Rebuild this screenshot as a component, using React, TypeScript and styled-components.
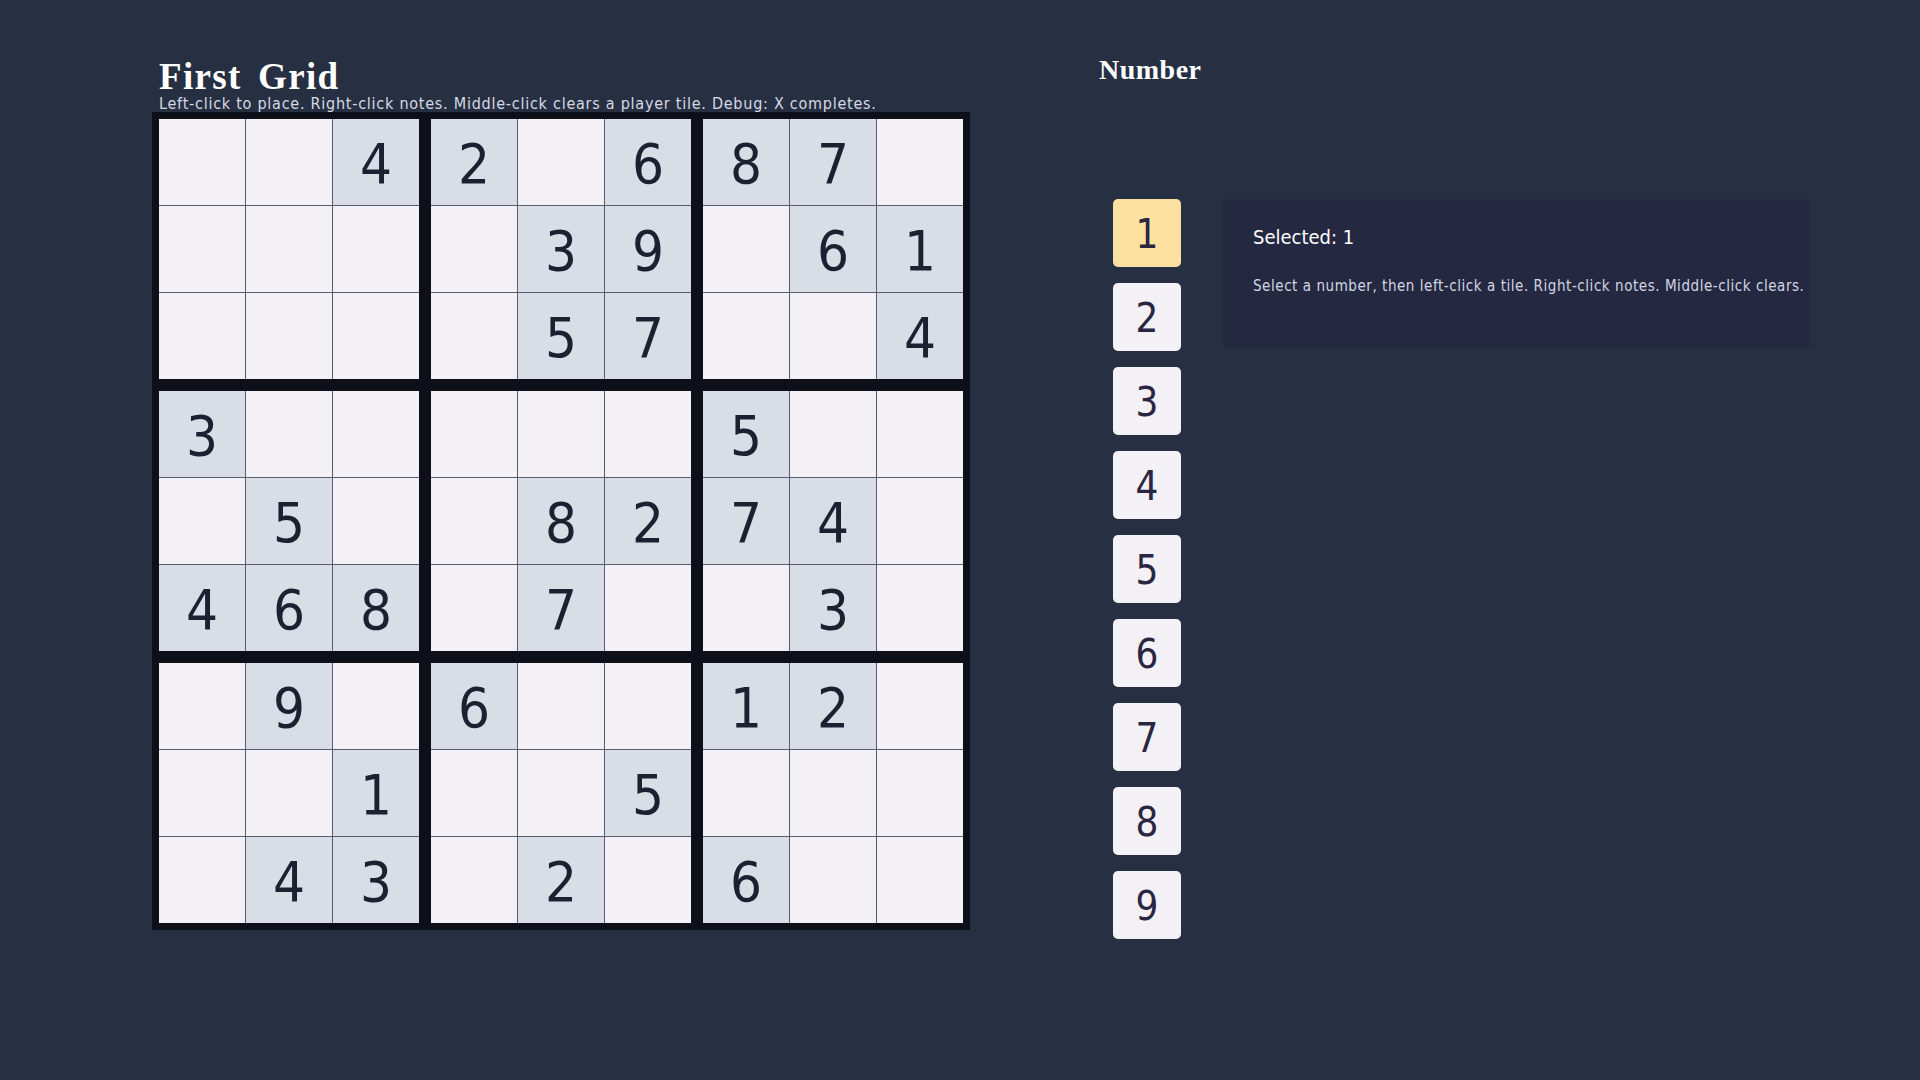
import React from "react";
import styled, { createGlobalStyle } from "styled-components";

const GlobalStyle = createGlobalStyle`
  html, body {
    margin: 0;
    padding: 0;
    background: #272f42;
  }
  body {
    font-family: "DejaVu Sans Condensed", "Liberation Sans Narrow", "Liberation Sans", sans-serif;
  }
`;

const COND = `"DejaVu Sans Condensed", "Liberation Sans Narrow", "Liberation Sans", sans-serif`;

const Page = styled.div`
  min-height: 100vh;
  box-sizing: border-box;
  padding: 56px 0 0 152px;
  display: flex;
  align-items: flex-start;
  gap: 129px;
`;

const LeftColumn = styled.section`
  display: flex;
  flex-direction: column;
  width: 818px;
`;

const Header = styled.header`
  padding-left: 7px;
  padding-top: 3px;
`;

const Title = styled.h1`
  margin: 0;
  font-family: "Liberation Serif", serif;
  font-weight: 700;
  font-size: 37px;
  line-height: 36px;
  letter-spacing: 1.3px;
  word-spacing: 6px;
  color: #ffffff;
`;

const Subtitle = styled.p`
  margin: 0;
  font-family: ${COND};
  font-size: 16px;
  line-height: 17px;
  letter-spacing: 0.75px;
  color: #d6d9e4;
  white-space: nowrap;
`;

const Board = styled.div`
  display: grid;
  grid-template-columns: repeat(3, 260px);
  grid-template-rows: repeat(3, 260px);
  gap: 12px;
  padding: 7px;
  background: #0d1019;
  width: max-content;
`;

const Box = styled.div`
  display: grid;
  grid-template-columns: repeat(3, 86px);
  grid-template-rows: repeat(3, 86px);
  gap: 1px;
  background: #575c70;
`;

const Cell = styled.div<{ $given: boolean }>`
  display: flex;
  align-items: center;
  justify-content: center;
  background: ${(p) => (p.$given ? "#d9dde6" : "#f3f0f6")};
  font-family: ${COND};
  font-size: 56px;
  line-height: 1;
  color: #1d2030;
  padding-top: 3px;
  box-sizing: border-box;
`;

const RightColumn = styled.section`
  display: flex;
  flex-direction: column;
`;

const Heading = styled.h2`
  margin: 0;
  font-family: "Liberation Serif", serif;
  font-weight: 700;
  font-size: 28px;
  line-height: 28px;
  letter-spacing: 0.5px;
  color: #ffffff;
`;

const PickerRow = styled.div`
  display: flex;
  align-items: flex-start;
  gap: 42px;
  margin-top: 115px;
  padding-left: 14px;
`;

const NumberList = styled.div`
  display: flex;
  flex-direction: column;
  gap: 16px;
`;

const NumberButton = styled.button<{ $active: boolean }>`
  width: 68px;
  height: 68px;
  border: none;
  border-radius: 5px;
  padding: 2px 0 0;
  background: ${(p) => (p.$active ? "#fde1a0" : "#f3f0f6")};
  color: #2a2540;
  font-family: ${COND};
  font-size: 40px;
  line-height: 1;
  display: flex;
  align-items: center;
  justify-content: center;
  cursor: pointer;
`;

const InfoPanel = styled.div`
  width: 587px;
  height: 149px;
  box-sizing: border-box;
  background: #242841;
  border-radius: 3px;
  padding: 25px 30px 0;
`;

const SelectedText = styled.div`
  font-family: ${COND};
  font-size: 20px;
  line-height: 26px;
  color: #ffffff;
`;

const HelpText = styled.div`
  margin-top: 26px;
  font-family: ${COND};
  font-size: 15px;
  line-height: 20px;
  letter-spacing: 0.55px;
  color: #d3d6e2;
  white-space: nowrap;
`;

const PUZZLE: (number | null)[][] = [
  [null, null, 4, 2, null, 6, 8, 7, null],
  [null, null, null, null, 3, 9, null, 6, 1],
  [null, null, null, null, 5, 7, null, null, 4],
  [3, null, null, null, null, null, 5, null, null],
  [null, 5, null, null, 8, 2, 7, 4, null],
  [4, 6, 8, null, 7, null, null, 3, null],
  [null, 9, null, 6, null, null, 1, 2, null],
  [null, null, 1, null, null, 5, null, null, null],
  [null, 4, 3, null, 2, null, 6, null, null],
];

export default function App() {
  const selected = 1;
  return (
    <>
      <GlobalStyle />
      <Page>
        <LeftColumn>
          <Header>
            <Title>First Grid</Title>
            <Subtitle>
              Left-click to place. Right-click notes. Middle-click clears a player tile. Debug: X completes.
            </Subtitle>
          </Header>
          <Board>
            {Array.from({ length: 9 }, (_, b) => (
              <Box key={b}>
                {Array.from({ length: 9 }, (_, i) => {
                  const r = Math.floor(b / 3) * 3 + Math.floor(i / 3);
                  const c = (b % 3) * 3 + (i % 3);
                  const v = PUZZLE[r][c];
                  return (
                    <Cell key={i} $given={v !== null}>
                      {v ?? ""}
                    </Cell>
                  );
                })}
              </Box>
            ))}
          </Board>
        </LeftColumn>
        <RightColumn>
          <Heading>Number</Heading>
          <PickerRow>
            <NumberList>
              {[1, 2, 3, 4, 5, 6, 7, 8, 9].map((n) => (
                <NumberButton key={n} $active={n === selected}>
                  {n}
                </NumberButton>
              ))}
            </NumberList>
            <InfoPanel>
              <SelectedText>Selected: {selected}</SelectedText>
              <HelpText>
                Select a number, then left-click a tile. Right-click notes. Middle-click clears.
              </HelpText>
            </InfoPanel>
          </PickerRow>
        </RightColumn>
      </Page>
    </>
  );
}
